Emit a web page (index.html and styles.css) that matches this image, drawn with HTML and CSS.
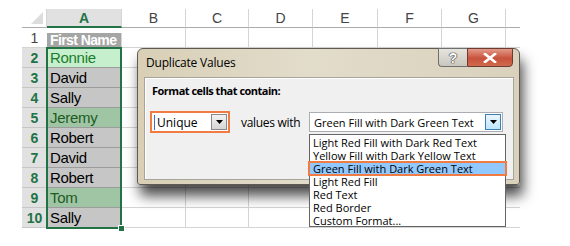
FILE: index.html
```html
<!DOCTYPE html>
<html>
<head>
<meta charset="utf-8">
<link rel="stylesheet" href="styles.css">
</head>
<body>
<div class="page">
  <div class="sheet">
    <div class="corner"><svg width="14" height="14" viewBox="0 0 14 14"><polygon points="13,1 13,13 1,13" fill="#dcdcdc"/></svg></div>
    <div class="colhead selcol">A</div>
    <div class="colhead">B</div>
    <div class="colhead">C</div>
    <div class="colhead">D</div>
    <div class="colhead">E</div>
    <div class="colhead">F</div>
    <div class="colhead">G</div>
    <div class="colhead stub"></div>

    <div class="rowhead">1</div><div class="cell a title"><span class="title-text">First Name</span></div><div class="cell"></div><div class="cell"></div><div class="cell"></div><div class="cell"></div><div class="cell"></div><div class="cell"></div><div class="cell stub"></div>
    <div class="rowhead sel">2</div><div class="cell a good">Ronnie</div><div class="cell"></div><div class="cell"></div><div class="cell"></div><div class="cell"></div><div class="cell"></div><div class="cell"></div><div class="cell stub"></div>
    <div class="rowhead sel">3</div><div class="cell a grey">David</div><div class="cell"></div><div class="cell"></div><div class="cell"></div><div class="cell"></div><div class="cell"></div><div class="cell"></div><div class="cell stub"></div>
    <div class="rowhead sel">4</div><div class="cell a grey">Sally</div><div class="cell"></div><div class="cell"></div><div class="cell"></div><div class="cell"></div><div class="cell"></div><div class="cell"></div><div class="cell stub"></div>
    <div class="rowhead sel">5</div><div class="cell a goodsel">Jeremy</div><div class="cell"></div><div class="cell"></div><div class="cell"></div><div class="cell"></div><div class="cell"></div><div class="cell"></div><div class="cell stub"></div>
    <div class="rowhead sel">6</div><div class="cell a grey">Robert</div><div class="cell"></div><div class="cell"></div><div class="cell"></div><div class="cell"></div><div class="cell"></div><div class="cell"></div><div class="cell stub"></div>
    <div class="rowhead sel">7</div><div class="cell a grey">David</div><div class="cell"></div><div class="cell"></div><div class="cell"></div><div class="cell"></div><div class="cell"></div><div class="cell"></div><div class="cell stub"></div>
    <div class="rowhead sel">8</div><div class="cell a grey">Robert</div><div class="cell"></div><div class="cell"></div><div class="cell"></div><div class="cell"></div><div class="cell"></div><div class="cell"></div><div class="cell stub"></div>
    <div class="rowhead sel">9</div><div class="cell a goodsel">Tom</div><div class="cell"></div><div class="cell"></div><div class="cell"></div><div class="cell"></div><div class="cell"></div><div class="cell"></div><div class="cell stub"></div>
    <div class="rowhead sel">10</div><div class="cell a grey">Sally</div><div class="cell"></div><div class="cell"></div><div class="cell"></div><div class="cell"></div><div class="cell"></div><div class="cell"></div><div class="cell stub"></div>
  </div>

  <div class="selection"><div class="handle"></div></div>

  <div class="dialog">
    <div class="titlebar">
      <span class="title">Duplicate Values</span>
      <div class="caption-btns">
        <div class="btn-help">?</div>
        <div class="btn-close"><svg width="14" height="10" viewBox="0 0 14 10"><path d="M2 1 L12 9 M12 1 L2 9" stroke="#fff" stroke-width="2.6" stroke-linecap="square"/></svg></div>
      </div>
    </div>
    <div class="panel">
      <div class="label">Format cells that contain:</div>
      <div class="controls">
        <div class="combo-unique">
          <span class="caret"></span><span class="val">Unique</span>
          <div class="dd-btn"><svg width="7" height="4" viewBox="0 0 7 4"><polygon points="0,0 7,0 3.5,4" fill="#000"/></svg></div>
        </div>
        <span class="values-with">values with</span>
        <div class="combo-format">
          <span class="val">Green Fill with Dark Green Text</span>
          <div class="dd-btn blue"><svg width="7" height="4" viewBox="0 0 7 4"><polygon points="0,0 7,0 3.5,4" fill="#000"/></svg></div>
        </div>
      </div>
    </div>
  </div>

  <ul class="list">
    <li>Light Red Fill with Dark Red Text</li>
    <li>Yellow Fill with Dark Yellow Text</li>
    <li class="hl">Green Fill with Dark Green Text</li>
    <li>Light Red Fill</li>
    <li>Red Text</li>
    <li>Red Border</li>
    <li>Custom Format...</li>
  </ul>
</div>
</body>
</html>
```

FILE: styles.css
```css
html, body {
  margin: 0;
  padding: 0;
  background: #fff;
}
.page {
  position: relative;
  width: 570px;
  height: 246px;
  overflow: hidden;
}
.sheet {
  margin: 9px 0 0 22px;
  display: grid;
  grid-template-columns: 25px 75px 64px 63px 64px 65px 64px 64px 14px;
  grid-template-rows: 19px repeat(10, 20px);
  font-family: "Liberation Sans", Arial, sans-serif;
  font-size: 14px;
}
.corner {
  border-bottom: 1px solid #ababab;
  border-right: 1px solid #d4d4d4;
  display: flex;
  align-items: flex-end;
  justify-content: flex-end;
  box-sizing: border-box;
  padding: 0 2px 2px 0;
  background: #fff;
}
.colhead {
  box-sizing: border-box;
  border-bottom: 1px solid #ababab;
  border-right: 1px solid #d4d4d4;
  display: flex;
  align-items: center;
  justify-content: center;
  color: #444;
  font-size: 14px;
  background: #fff;
}
.colhead.stub {
  border-right: none;
}
.colhead.selcol {
  background: #e1e1e1;
  color: #217346;
  font-weight: bold;
  border-bottom: 2px solid #217346;
}
.rowhead {
  box-sizing: border-box;
  border-bottom: 1px solid #d4d4d4;
  display: flex;
  align-items: center;
  justify-content: center;
  color: #444;
  background: #fff;
  font-size: 14px;
}
.rowhead.sel {
  background: #e1e1e1;
  color: #217346;
  font-weight: bold;
  border-bottom-color: #c6c6c6;
}
.cell {
  box-sizing: border-box;
  border-right: 1px solid #d4d4d4;
  border-bottom: 1px solid #d4d4d4;
  display: flex;
  align-items: center;
  padding-left: 3px;
  color: #000;
  font-size: 15px;
  letter-spacing: -0.3px;
}
.cell.stub {
  border-right: none;
}
.cell.a {
  border-bottom-color: #9c9c9c;
}
.cell.title {
  background: #a5a5a5;
  color: #fff;
}
.title-text {
  font-family: "Liberation Sans", Arial, sans-serif;
  font-size: 14px;
  font-weight: 700;
  letter-spacing: -0.6px;
  white-space: nowrap;
}
.cell.good {
  background: #c6efce;
  color: #1a7d2a;
}
.cell.grey {
  background: #c6c6c6;
}
.cell.goodsel {
  background: #a0c5a5;
  color: #1c5c22;
}
.selection {
  position: absolute;
  left: 46px;
  top: 47px;
  width: 72px;
  height: 178px;
  border: 2px solid #217346;
}
.handle {
  position: absolute;
  right: -5px;
  bottom: -5px;
  width: 5px;
  height: 5px;
  background: #217346;
  border: 1px solid #fff;
}
.dialog {
  position: absolute;
  left: 137px;
  top: 48px;
  width: 383px;
  height: 137px;
  box-sizing: border-box;
  border: 1px solid #5e5a50;
  border-radius: 6px 6px 3px 3px;
  background: linear-gradient(to right, #d8cfb6 0%, #e2dccb 45%, #d9d1bc 100%);
  box-shadow: 3px 11px 13px rgba(0, 0, 0, 0.7);
  font-family: "Open Sans", "Noto Sans", sans-serif;
  font-size: 11px;
  color: #000;
  display: flex;
  flex-direction: column;
}
.titlebar {
  height: 28px;
  display: flex;
  justify-content: space-between;
  align-items: flex-start;
  padding-left: 8px;
}
.title {
  margin-top: 5px;
  font-size: 12px;
  letter-spacing: -0.2px;
}
.caption-btns {
  display: flex;
  margin-right: 6px;
  margin-top: -1px;
}
.btn-help {
  width: 29px;
  height: 19px;
  box-sizing: border-box;
  border: 1px solid #6f6f6f;
  border-right: none;
  border-radius: 0 0 0 4px;
  background: linear-gradient(#e6e4de, #c9c6bd);
  display: flex;
  align-items: center;
  justify-content: center;
  color: #fff;
  font-family: "Liberation Sans", sans-serif;
  font-weight: bold;
  font-size: 14px;
  text-shadow: 0 0 1px #222, 0 0 1px #222, 0 0 1px #222;
}
.btn-close {
  width: 46px;
  height: 19px;
  box-sizing: border-box;
  border: 1px solid #6f3a2f;
  border-radius: 0 0 4px 0;
  background: linear-gradient(#e39a8a, #c8523b 55%, #cf6a4d);
  display: flex;
  align-items: center;
  justify-content: center;
}
.panel {
  margin: 0 5px 4px 6px;
  flex: 1;
  background: #f0f0f0;
  border: 1px solid #a7a49a;
  box-shadow: inset 1px 1px 0 #fff;
  padding: 5px 0 0 7px;
}
.label {
  font-weight: bold;
  letter-spacing: -0.5px;
}
.controls {
  display: flex;
  align-items: center;
  margin-top: 13px;
  margin-left: -2px;
}
.combo-unique {
  width: 80px;
  height: 22px;
  box-sizing: border-box;
  border: 2px solid #f07c43;
  background: #fff;
  display: flex;
  align-items: center;
  position: relative;
  font-size: 12px;
}
.caret {
  width: 1px;
  height: 15px;
  background: #3b6fc6;
  margin-left: 2px;
}
.val {
  margin-left: 2px;
  flex: 1;
  white-space: nowrap;
}
.dd-btn {
  width: 16px;
  height: 16px;
  box-sizing: border-box;
  border: 1px solid #8a8a8a;
  background: linear-gradient(#f2f2f2, #d6d6d6);
  display: flex;
  align-items: center;
  justify-content: center;
  margin-right: 1px;
  flex: none;
}
.dd-btn.blue {
  border-color: #3c7fb1;
  background: linear-gradient(#eaf6fd, #bee6fd);
}
.values-with {
  margin-left: 11px;
  width: 68px;
  font-size: 12px;
  letter-spacing: -0.3px;
}
.combo-format {
  width: 194px;
  height: 20px;
  box-sizing: border-box;
  border: 1px solid #abadb3;
  background: #fff;
  display: flex;
  align-items: center;
  padding-left: 2px;
}
.list {
  position: absolute;
  left: 309px;
  top: 134px;
  width: 197px;
  height: 93px;
  box-sizing: border-box;
  margin: 0;
  padding: 1px 0 0 0;
  list-style: none;
  background: #fff;
  border: 1px solid #646464;
  font-family: "Open Sans", "Noto Sans", sans-serif;
  font-size: 11px;
  line-height: 13px;
}
.list li {
  height: 13px;
  padding-left: 3px;
  white-space: nowrap;
}
.list li.hl {
  background: #91c8ff;
  outline: 2px solid #f07c43;
  outline-offset: -1px;
  margin: 0 -1px;
  padding-left: 4px;
}
```
